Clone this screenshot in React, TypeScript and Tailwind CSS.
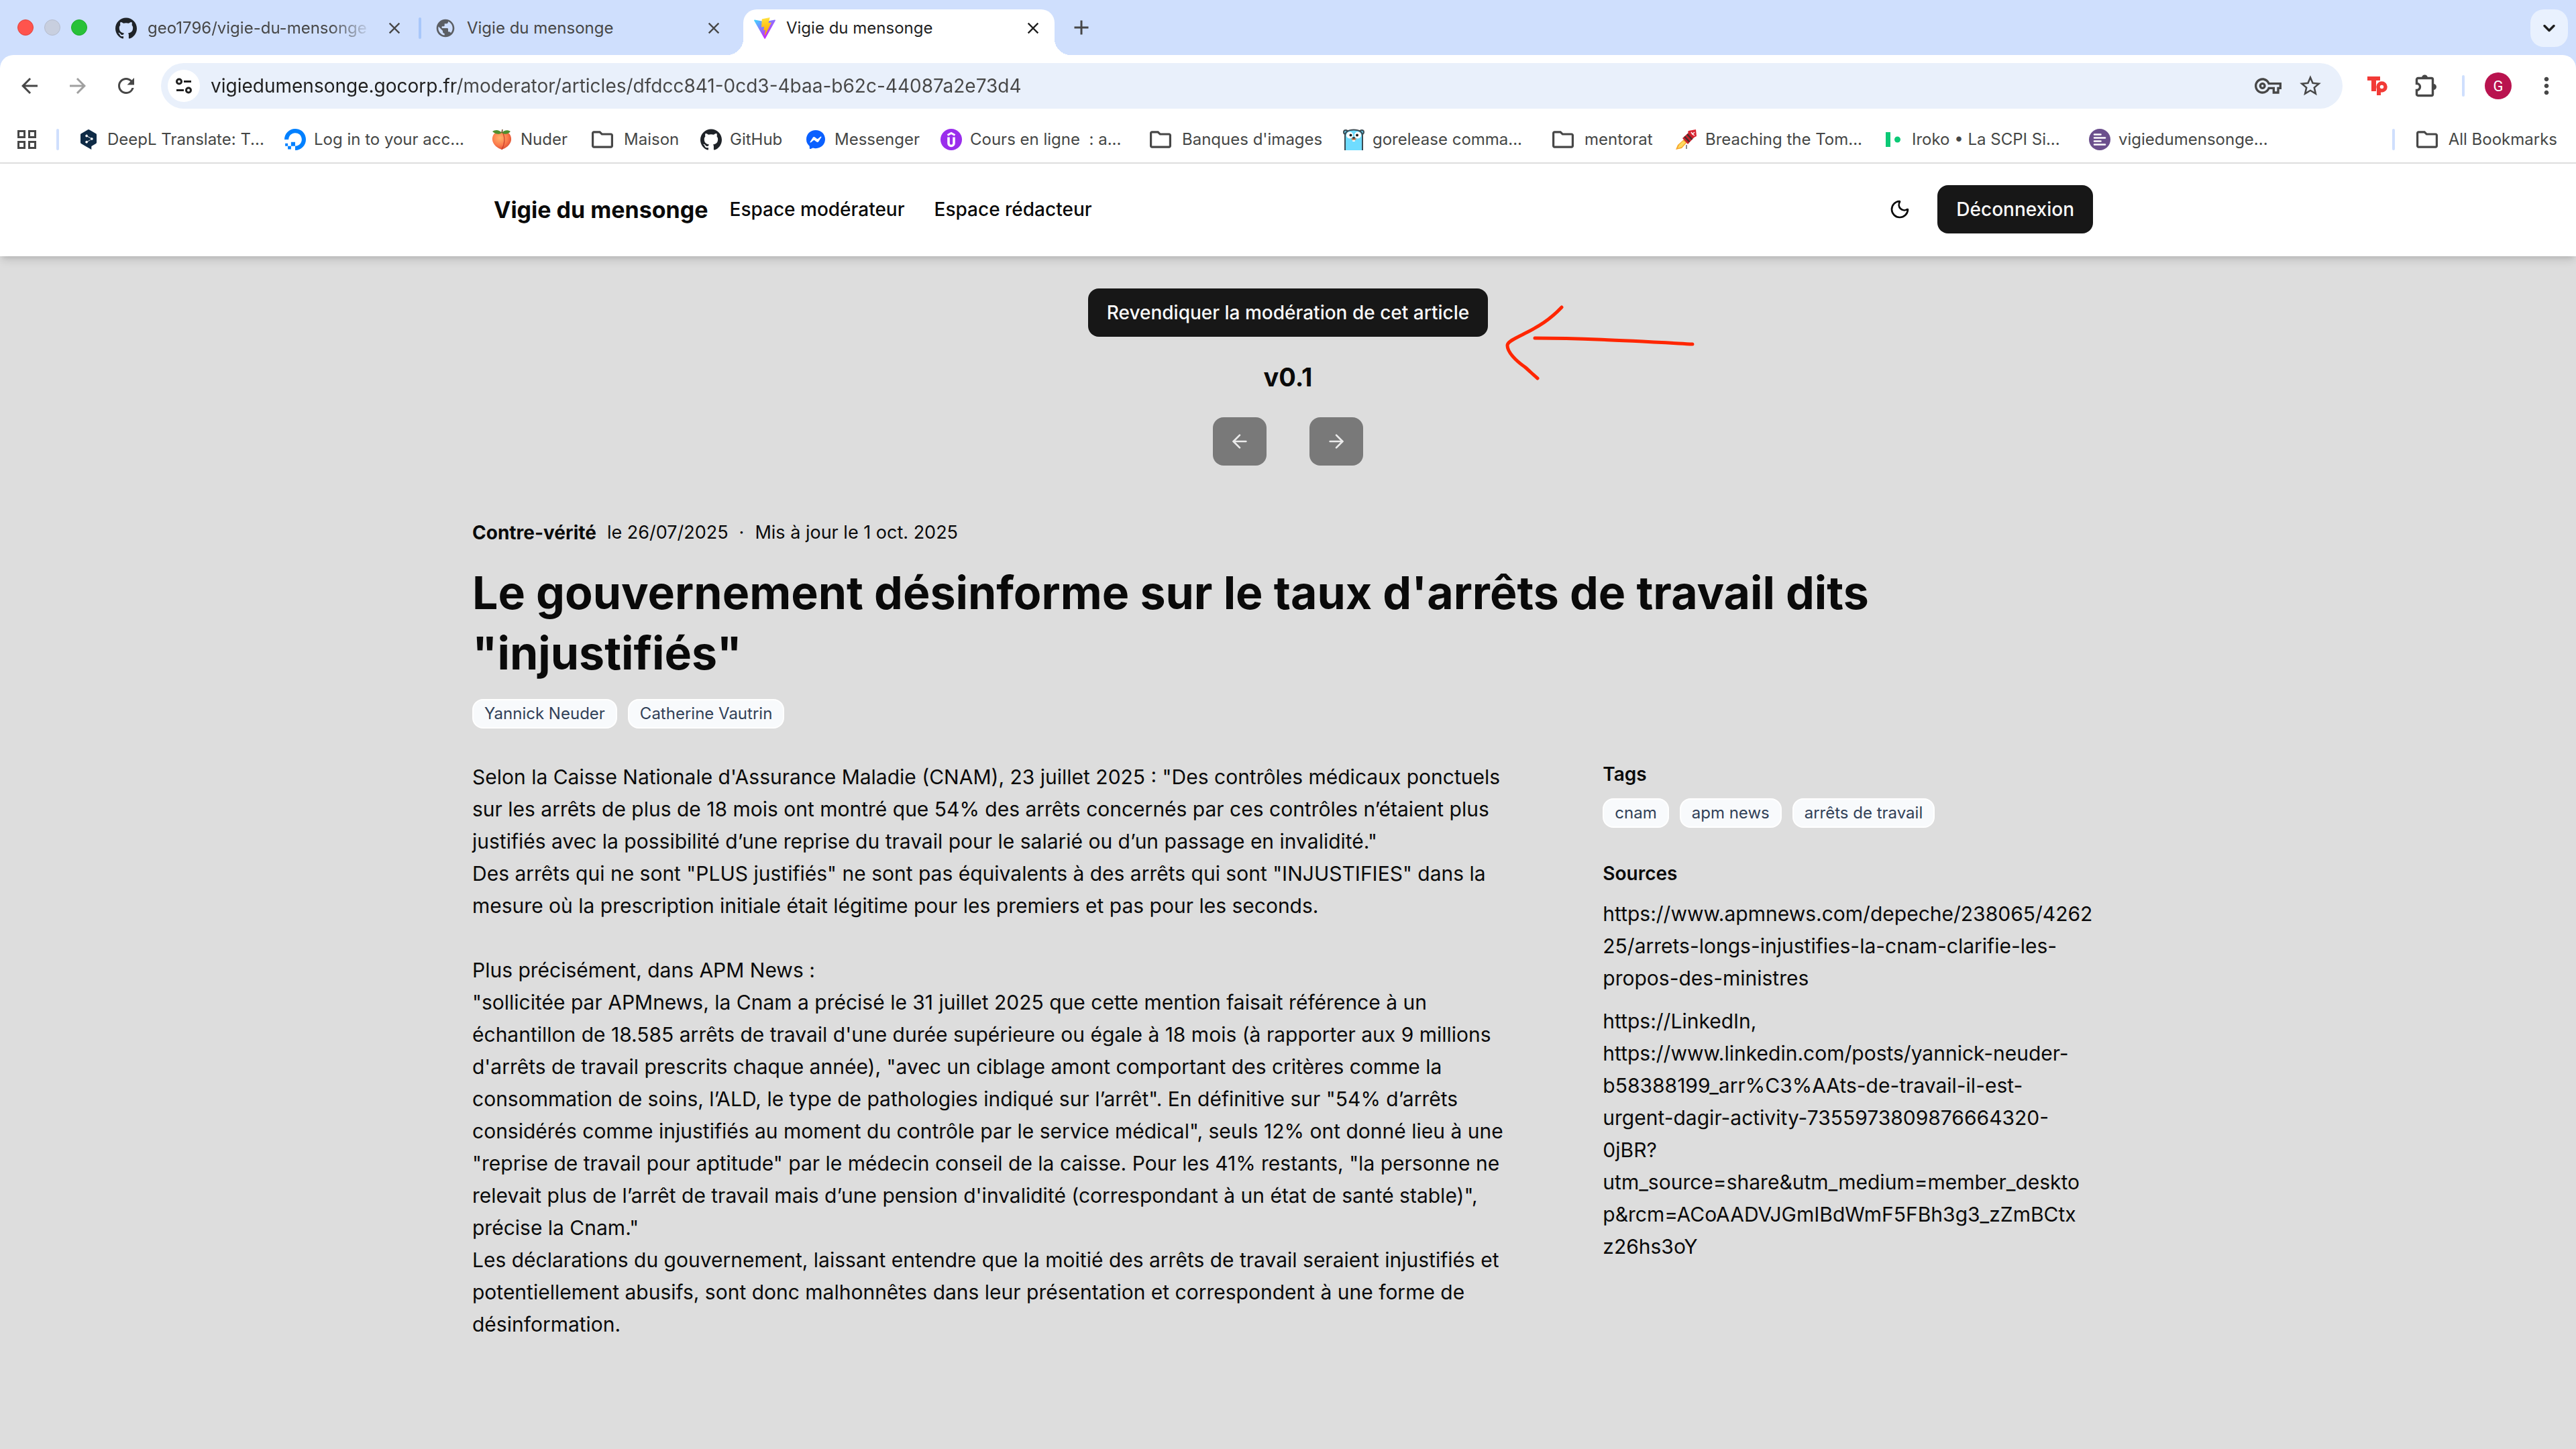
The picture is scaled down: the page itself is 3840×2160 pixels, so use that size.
import type { ReactNode } from "react";
import {
  MdAdd,
  MdArrowBack,
  MdArrowForward,
  MdClose,
  MdMoreVert,
  MdOutlineVpnKey,
  MdPublic,
  MdRefresh,
  MdStarBorder,
} from "react-icons/md";
import { SiDeepl, SiDigitalocean, SiGithub, SiMessenger } from "react-icons/si";
import { ArrowLeft, ArrowRight, ChevronDown, Moon } from "lucide-react";

function ViteLogo() {
  return (
    <svg viewBox="0 0 256 257" className="size-8 shrink-0" aria-hidden="true">
      <defs>
        <linearGradient id="viteShield" x1="-.8%" x2="57.6%" y1="7.7%" y2="78.4%">
          <stop offset="0%" stopColor="#41D1FF" />
          <stop offset="100%" stopColor="#BD34FE" />
        </linearGradient>
        <linearGradient id="viteBolt" x1="43.4%" x2="50.3%" y1="2.2%" y2="89%">
          <stop offset="0%" stopColor="#FFEA83" />
          <stop offset="8.3%" stopColor="#FFDD35" />
          <stop offset="100%" stopColor="#FFA800" />
        </linearGradient>
      </defs>
      <path
        fill="url(#viteShield)"
        d="M255.153 37.938L134.897 252.976c-2.483 4.44-8.862 4.466-11.382.048L.875 37.958c-2.746-4.814 1.371-10.646 6.827-9.67l120.385 21.517a6.537 6.537 0 0 0 2.322-.004l117.867-21.483c5.438-.991 9.574 4.796 6.877 9.62Z"
      />
      <path
        fill="url(#viteBolt)"
        d="M185.432.063L96.44 17.501a3.268 3.268 0 0 0-2.634 3.014l-5.474 92.456a3.268 3.268 0 0 0 3.997 3.378l24.777-5.718c2.318-.535 4.413 1.507 3.936 3.838l-7.361 36.047c-.495 2.426 1.782 4.5 4.151 3.78l15.304-4.649c2.372-.72 4.652 1.36 4.15 3.788l-11.698 56.621c-.732 3.542 3.979 5.473 5.943 2.437l1.313-2.028l72.516-144.72c1.215-2.423-.88-5.186-3.54-4.672l-25.505 4.922c-2.396.462-4.435-1.77-3.759-4.114l16.646-57.705c.677-2.35-1.37-4.583-3.769-4.113Z"
      />
    </svg>
  );
}

function FolderIcon() {
  return (
    <svg viewBox="2 2 20 20" className="mr-1 size-8 shrink-0" fill="#474747" aria-hidden="true">
      <path d="M20 6h-8l-2-2H4c-1.1 0-1.99.9-1.99 2L2 18c0 1.1.9 2 2 2h16c1.1 0 2-.9 2-2V8c0-1.1-.9-2-2-2zm0 12H4V6h5.17l2 2H20v10z" />
    </svg>
  );
}

function AppsIcon() {
  return (
    <svg viewBox="0 0 28 28" className="size-7" fill="none" stroke="#474747" strokeWidth="3" aria-hidden="true">
      <rect x="1.500" y="1.500" width="9" height="9" />
      <rect x="17.500" y="1.500" width="9" height="9" />
      <rect x="1.500" y="17.500" width="9" height="9" />
      <rect x="17.500" y="17.500" width="9" height="9" />
    </svg>
  );
}

function SiteSettingsIcon() {
  return (
    <svg viewBox="0 0 24 24" className="size-6" fill="none" stroke="#1f1f1f" strokeWidth="3" aria-hidden="true">
      <circle cx="5" cy="5.500" r="3.500" />
      <path d="M12 5.500h11M1 18.500h11" />
      <circle cx="19" cy="18.500" r="3.500" />
    </svg>
  );
}

function PuzzleIcon() {
  return (
    <svg viewBox="0 0 34 34" className="h-[34px] w-[34px]" aria-hidden="true">
      <path
        d="M4.500 5.500h20a2 2 0 0 1 2 2v22a2 2 0 0 1-2 2h-20a2 2 0 0 1-2-2v-6a5 5 0 0 0 0-10v-6a2 2 0 0 1 2-2z"
        fill="none"
        stroke="#474747"
        strokeWidth="3.400"
      />
      <path d="M10 5a4.500 4.500 0 0 1 9 0zM27.500 14a4.500 4.500 0 0 1 0 9z" fill="#474747" />
    </svg>
  );
}

function TpLogo() {
  return (
    <svg viewBox="0 0 32 32" className="size-8" aria-hidden="true">
      <g fill="#f23a36">
        <rect x="1" y="2" width="19" height="6" />
        <rect x="7" y="2" width="7" height="22" />
        <rect x="15" y="17" width="6" height="13" />
      </g>
      <circle cx="22.500" cy="17.500" r="5.500" fill="#fff" stroke="#f23a36" strokeWidth="5.500" />
    </svg>
  );
}

function PeachIcon() {
  return (
    <svg viewBox="0 0 32 32" className="size-8 shrink-0" aria-hidden="true">
      <defs>
        <radialGradient id="peachSkin" cx="40%" cy="35%" r="70%">
          <stop offset="0%" stopColor="#ffb36b" />
          <stop offset="60%" stopColor="#fb7a4b" />
          <stop offset="100%" stopColor="#d9482f" />
        </radialGradient>
      </defs>
      <path d="M16 5C7 2 1 9 2 17c1 7 8 12 14 14 6-2 13-7 14-14C31 9 25 2 16 5z" fill="url(#peachSkin)" />
      <path d="M17 5c4 7 4 17-1 26" fill="none" stroke="#c9402c" strokeWidth="1.200" />
      <path d="M16 6C12 1 6 1 2 4c4 4 10 5 14 2zM16 6c3-4 9-5 13-2-3 4-9 5-13 2z" fill="#4f8f2e" />
      <path d="M16 6l1-5" stroke="#6b4a24" strokeWidth="1.500" />
    </svg>
  );
}

function UdemyIcon() {
  return (
    <svg viewBox="0 0 32 32" className="size-8 shrink-0" fill="none" aria-hidden="true">
      <circle cx="16" cy="16" r="16" fill="#9a2eec" />
      <path d="M10.500 9.500L16 6.500l5.500 3" stroke="#fff" strokeWidth="3" />
      <path d="M12 12.500v9a4 4 0 0 0 8 0v-9" stroke="#fff" strokeWidth="3.600" />
    </svg>
  );
}

function GopherIcon() {
  return (
    <svg viewBox="0 0 32 32" className="size-8 shrink-0" aria-hidden="true">
      <circle cx="4" cy="5" r="3" fill="#6ad7f7" stroke="#3b4a52" strokeWidth="2" />
      <circle cx="28" cy="5" r="3" fill="#6ad7f7" stroke="#3b4a52" strokeWidth="2" />
      <path d="M3 32V11C3 4 9 1.500 16 1.500S29 4 29 11v21" fill="#6fdcff" stroke="#3b4a52" strokeWidth="2" />
      <circle cx="10" cy="9.500" r="5" fill="#fff" />
      <circle cx="22" cy="9.500" r="5" fill="#fff" />
      <circle cx="11.500" cy="9.500" r="2" fill="#1c1c1c" />
      <circle cx="21" cy="9.500" r="2" fill="#1c1c1c" />
      <rect x="14" y="15" width="4" height="4" rx="1" fill="#fff" />
      <ellipse cx="16" cy="15" rx="3.500" ry="2" fill="#c6855f" />
      <ellipse cx="16" cy="13.500" rx="2" ry="1.300" fill="#2b2b2b" />
    </svg>
  );
}

function FirecrackerIcon() {
  return (
    <svg viewBox="0 0 32 32" className="size-8 shrink-0" aria-hidden="true">
      <path d="M12 16l-9 8-3 7 9-2 8-9z" fill="#f6a62b" />
      <path d="M11 18l-6 6-2 5 6-2 6-7z" fill="#ffd95e" />
      <path d="M16 24v6" stroke="#666" strokeWidth="1.500" />
      <path d="M10 14L21 4l8 7-11 12z" fill="#c8202b" />
      <path d="M19 3l11-2 1 10-4 2-9-8z" fill="#d92632" />
      <path d="M13 11.500l7.500 8M17 8l7.500 8" stroke="#45302e" strokeWidth="2.400" />
      <path d="M23 5l2 3 3-3M25 8l3 2" fill="none" stroke="#fff" strokeWidth="1.400" />
    </svg>
  );
}

function IrokoIcon() {
  return (
    <svg viewBox="0 0 32 32" className="size-8 shrink-0" fill="#0cc976" aria-hidden="true">
      <rect x="5" y="5" width="7" height="22" />
      <circle cx="22.500" cy="16" r="4.500" />
    </svg>
  );
}

function ListCircleIcon() {
  return (
    <svg viewBox="0 0 32 32" className="size-8 shrink-0" aria-hidden="true">
      <circle cx="16" cy="16" r="16" fill="#6b4f8d" />
      <path d="M8 8.500h9.500M8 13.500h16M8 18.500h9.500M8 23.500h16" stroke="#fff" strokeWidth="2.600" strokeLinecap="round" />
    </svg>
  );
}

const bookmarks: { label: string; width: string; icon: ReactNode }[] = [
  { label: "DeepL Translate: T...", width: "w-[308px]", icon: <SiDeepl className="size-8 shrink-0 p-px text-[#0f2b46]" /> },
  { label: "Log in to your acc...", width: "w-[308px]", icon: <SiDigitalocean className="size-8 shrink-0 text-[#0080ff]" /> },
  { label: "Nuder", width: "w-[150px]", icon: <PeachIcon /> },
  { label: "Maison", width: "w-[162px]", icon: <FolderIcon /> },
  { label: "GitHub", width: "w-[156px]", icon: <SiGithub className="size-8 shrink-0 text-[#1f2328]" /> },
  { label: "Messenger", width: "w-[202px]", icon: <SiMessenger className="size-8 shrink-0 p-[2px] text-[#0a60ff]" /> },
  { label: "Cours en ligne  : a...", width: "w-[312px]", icon: <UdemyIcon /> },
  { label: "Banques d'images", width: "w-[288px]", icon: <FolderIcon /> },
  { label: "gorelease comma...", width: "w-[312px]", icon: <GopherIcon /> },
  { label: "mentorat", width: "w-[184px]", icon: <FolderIcon /> },
  { label: "Breaching the Tom...", width: "w-[308px]", icon: <FirecrackerIcon /> },
  { label: "Iroko • La SCPI Si...", width: "w-[308px]", icon: <IrokoIcon /> },
  { label: "vigiedumensonge...", width: "w-[308px]", icon: <ListCircleIcon /> },
];

function TabStrip() {
  return (
    <div className="flex h-[82px] items-start pt-[14px] text-2xl text-[#474747]">
      <div className="flex h-[54px] items-center gap-4 pl-[26px]">
        <span className="size-6 rounded-full border border-[#e0443e] bg-[#ff544d]" />
        <span className="size-6 rounded-full border border-[#b5bccd] bg-[#c8cfdf]" />
        <span className="size-6 rounded-full border border-[#1dad2b] bg-[#28c138]" />
      </div>
      <div className="ml-[26px] flex h-14 w-[464px] items-center pr-[18px] pl-4">
        <SiGithub className="size-8 shrink-0 text-[#1f2328]" />
        <span className="ml-4 w-[328px] shrink-0 overflow-hidden whitespace-nowrap [mask-image:linear-gradient(90deg,#000_270px,transparent_336px)]">
          geo1796/vigie-du-mensonge
        </span>
        <button aria-label="Fermer l'onglet" className="ml-auto shrink-0">
          <MdClose className="size-7" />
        </button>
      </div>
      <span className="mt-3 ml-1 h-8 w-1 rounded-full bg-[#a8c7fa]" />
      <div className="ml-[6px] flex h-14 w-[462px] items-center pr-[18px] pl-[14px]">
        <MdPublic className="size-8 shrink-0 text-[#5b5e63]" />
        <span className="ml-4 flex-1">Vigie du mensonge</span>
        <button aria-label="Fermer l'onglet">
          <MdClose className="size-7" />
        </button>
      </div>
      <div className="relative ml-3 h-[68px] w-[464px] rounded-t-[20px] bg-white text-[#1f1f1f] before:absolute before:bottom-0 before:-left-6 before:size-6 before:bg-[radial-gradient(circle_at_0_0,transparent_24px,white_24px)] after:absolute after:-right-6 after:bottom-0 after:size-6 after:bg-[radial-gradient(circle_at_100%_0,transparent_24px,white_24px)]">
        <div className="flex h-14 items-center pr-[18px] pl-4">
          <ViteLogo />
          <span className="ml-4 flex-1">Vigie du mensonge</span>
          <button aria-label="Fermer l'onglet">
            <MdClose className="size-7" />
          </button>
        </div>
      </div>
      <button aria-label="Nouvel onglet" className="ml-[22px] flex h-[54px] items-center">
        <MdAdd className="size-9" />
      </button>
      <button aria-label="Rechercher dans les onglets" className="mr-3 ml-auto grid size-14 place-items-center rounded-[20px] bg-[#e9f1fe]">
        <ChevronDown className="size-7 text-[#1f1f1f]" strokeWidth={3} />
      </button>
    </div>
  );
}

function AddressBar() {
  return (
    <div className="flex items-center pt-3 pr-8 pb-3 pl-[26px] text-[#474747]">
      <button aria-label="Retour">
        <MdArrowBack className="size-9" />
      </button>
      <button aria-label="Avancer" className="ml-9 text-[#a0a0a0]">
        <MdArrowForward className="size-9" />
      </button>
      <button aria-label="Actualiser" className="ml-9">
        <MdRefresh className="size-9" />
      </button>
      <div className="ml-[34px] flex h-[68px] flex-1 items-center rounded-full bg-[#e9f0fb] pr-[29px] pl-[10px]">
        <button aria-label="Informations sur le site" className="grid size-12 place-items-center rounded-full bg-white">
          <SiteSettingsIcon />
        </button>
        <input
          type="text"
          aria-label="Adresse"
          defaultValue="vigiedumensonge.gocorp.fr/moderator/articles/dfdcc841-0cd3-4baa-b62c-44087a2e73d4"
          className="ml-4 h-12 flex-1 bg-[linear-gradient(90deg,#1f1f1f_364px,#474747_364px)] bg-clip-text text-[28px] text-transparent outline-none"
        />
        <button aria-label="Mots de passe">
          <MdOutlineVpnKey className="size-10" />
        </button>
        <button aria-label="Ajouter aux favoris" className="ml-6">
          <MdStarBorder className="size-[38px]" />
        </button>
      </div>
      <button aria-label="Extension Tp" className="ml-9">
        <TpLogo />
      </button>
      <button aria-label="Extensions" className="ml-10">
        <PuzzleIcon />
      </button>
      <span className="ml-9 h-8 w-1 rounded-full bg-[#cfdffd]" />
      <button aria-label="Profil" className="ml-[30px] grid size-10 place-items-center rounded-full bg-[#b9134f] font-[Roboto] text-[22px] text-white">
        G
      </button>
      <button aria-label="Menu" className="-mr-2 ml-8">
        <MdMoreVert className="size-10" />
      </button>
    </div>
  );
}

function BookmarksBar() {
  return (
    <nav aria-label="Favoris" className="flex h-[68px] items-center pr-7 pl-[26px] text-2xl whitespace-pre text-[#454746]">
      <button aria-label="Applications">
        <AppsIcon />
      </button>
      <span className="mr-7 ml-[30px] h-8 w-1 rounded-full bg-[#cfdffd]" />
      {bookmarks.map((b) => (
        <a key={b.label} href="#" className={`flex items-center gap-3 ${b.width}`}>
          {b.icon}
          {b.label}
        </a>
      ))}
      <span className="ml-auto h-8 w-1 rounded-full bg-[#cfdffd]" />
      <button className="ml-8 flex items-center gap-3">
        <FolderIcon />
        All Bookmarks
      </button>
    </nav>
  );
}

function Badge({ children }: { children: ReactNode }) {
  return (
    <span className="flex h-11 items-center rounded-[16px] border-2 border-white bg-slate-50 px-4 text-2xl text-slate-700">
      {children}
    </span>
  );
}

const articleBody = `Selon la Caisse Nationale d'Assurance Maladie (CNAM), 23 juillet 2025 : "Des contrôles médicaux ponctuels sur les arrêts de plus de 18 mois ont montré que 54% des arrêts concernés par ces contrôles n’étaient plus justifiés avec la possibilité d’une reprise du travail pour le salarié ou d’un passage en invalidité."
Des arrêts qui ne sont "PLUS justifiés" ne sont pas équivalents à des arrêts qui sont "INJUSTIFIES" dans la mesure où la prescription initiale était légitime pour les premiers et pas pour les seconds.

Plus précisément, dans APM News :
"sollicitée par APMnews, la Cnam a précisé le 31 juillet 2025 que cette mention faisait référence à un échantillon de 18.585 arrêts de travail d'une durée supérieure ou égale à 18 mois (à rapporter aux 9 millions d'arrêts de travail prescrits chaque année), "avec un ciblage amont comportant des critères comme la consommation de soins, l’ALD, le type de pathologies indiqué sur l’arrêt". En définitive sur "54% d’arrêts considérés comme injustifiés au moment du contrôle par le service médical", seuls 12% ont donné lieu à une "reprise de travail pour aptitude" par le médecin conseil de la caisse. Pour les 41% restants, "la personne ne relevait plus de l’arrêt de travail mais d’une pension d'invalidité (correspondant à un état de santé stable)", précise la Cnam."
Les déclarations du gouvernement, laissant entendre que la moitié des arrêts de travail seraient injustifiés et potentiellement abusifs, sont donc malhonnêtes dans leur présentation et correspondent à une forme de désinformation.`;

const sources = [
  `https://www.apmnews.com/depeche/238065/4262
25/arrets-longs-injustifies-la-cnam-clarifie-les-
propos-des-ministres`,
  `https://LinkedIn,
https://www.linkedin.com/posts/yannick-neuder-
b58388199_arr%C3%AAts-de-travail-il-est-
urgent-dagir-activity-7355973809876664320-
0jBR?
utm_source=share&utm_medium=member_deskto
p&rcm=ACoAADVJGmIBdWmF5FBh3g3_zZmBCtx
z26hs3oY`,
];

function SiteHeader() {
  return (
    <header className="relative z-10 border-b-2 border-white bg-white shadow-[0_8px_12px_-2px_rgb(0_0_0/0.12),0_4px_8px_-4px_rgb(0_0_0/0.12)]">
      <div className="mx-auto flex h-[136px] max-w-[2432px] items-center pr-4 pl-8 text-[28px] font-medium">
        <a href="#" className="text-[34px] font-bold">
          Vigie du mensonge
        </a>
        <nav className="ml-8 flex gap-11">
          <a href="#">Espace modérateur</a>
          <a href="#">Espace rédacteur</a>
        </nav>
        <button aria-label="Changer de thème" className="ml-auto grid size-16 place-items-center">
          <Moon className="size-8" />
        </button>
        <button className="ml-6 h-[72px] rounded-2xl bg-neutral-900 px-7 text-neutral-50">Déconnexion</button>
      </div>
    </header>
  );
}

function RedArrow() {
  return (
    <svg
      viewBox="0 0 300 130"
      className="pointer-events-none absolute top-5 left-full ml-5 h-[130px] w-[300px]"
      fill="none"
      stroke="#ff2600"
      strokeLinecap="round"
      aria-hidden="true"
    >
      <path d="M90 8C72 27 55 37 35 47C20 55 9 59 9 65C9 75 22 88 35 97C42 103 48 109 54 114" strokeWidth="5" />
      <path d="M50 54C120 54 190 58 285 63" strokeWidth="5" />
    </svg>
  );
}

export default function App() {
  return (
    <div className="flex min-h-screen flex-col bg-[#cfdffd] font-[Inter,sans-serif]">
      <TabStrip />
      <div className="flex flex-1 flex-col rounded-t-[20px] bg-white">
        <AddressBar />
        <BookmarksBar />
        <div className="flex flex-1 flex-col border-t-2 border-[#dedede] text-neutral-950">
          <SiteHeader />
          <main className="flex-1 bg-[#dddddd] pt-12 pb-16">
            <section className="flex flex-col items-center gap-8">
              <div className="relative">
                <button className="h-[72px] rounded-2xl bg-neutral-900 px-7 text-[28px] font-medium text-neutral-50">
                  Revendiquer la modération de cet article
                </button>
                <RedArrow />
              </div>
              <h2 className="text-[38px] leading-[56px] font-bold">v0.1</h2>
              <div className="flex gap-16">
                <button aria-label="Version précédente" disabled className="grid h-[72px] w-20 place-items-center rounded-2xl bg-neutral-900 text-neutral-50 opacity-50">
                  <ArrowLeft className="size-8" />
                </button>
                <button aria-label="Version suivante" disabled className="grid h-[72px] w-20 place-items-center rounded-2xl bg-neutral-900 text-neutral-50 opacity-50">
                  <ArrowRight className="size-8" />
                </button>
              </div>
            </section>
            <article className="mx-auto mt-20 max-w-[2432px]">
              <p className="flex gap-4 text-[27px] leading-[40px]">
                <span className="text-[28px] font-bold">Contre-vérité</span>
                <span>le 26/07/2025</span>
                <span>·</span>
                <span>Mis à jour le 1 oct. 2025</span>
              </p>
              <h1 className="mt-6 max-w-[2200px] text-[68px] leading-[90px] font-bold">
                Le gouvernement désinforme sur le taux d'arrêts de travail dits "injustifiés"
              </h1>
              <div className="mt-6 flex gap-4">
                <Badge>Yannick Neuder</Badge>
                <Badge>Catherine Vautrin</Badge>
              </div>
              <div className="mt-12 grid grid-cols-3 gap-24">
                <p className="col-span-2 pr-2 text-[30px] leading-[48px] whitespace-pre-line">{articleBody}</p>
                <aside>
                  <h3 className="text-[28px] leading-[40px] font-semibold">Tags</h3>
                  <div className="mt-4 flex gap-4">
                    <Badge>cnam</Badge>
                    <Badge>apm news</Badge>
                    <Badge>arrêts de travail</Badge>
                  </div>
                  <h3 className="mt-12 text-[28px] leading-[40px] font-semibold">Sources</h3>
                  <ul className="mt-4 flex flex-col gap-4 text-[30px] leading-[48px] whitespace-pre-line">
                    {sources.map((s) => (
                      <li key={s}>
                        <a href="#">{s}</a>
                      </li>
                    ))}
                  </ul>
                </aside>
              </div>
            </article>
          </main>
        </div>
      </div>
    </div>
  );
}
